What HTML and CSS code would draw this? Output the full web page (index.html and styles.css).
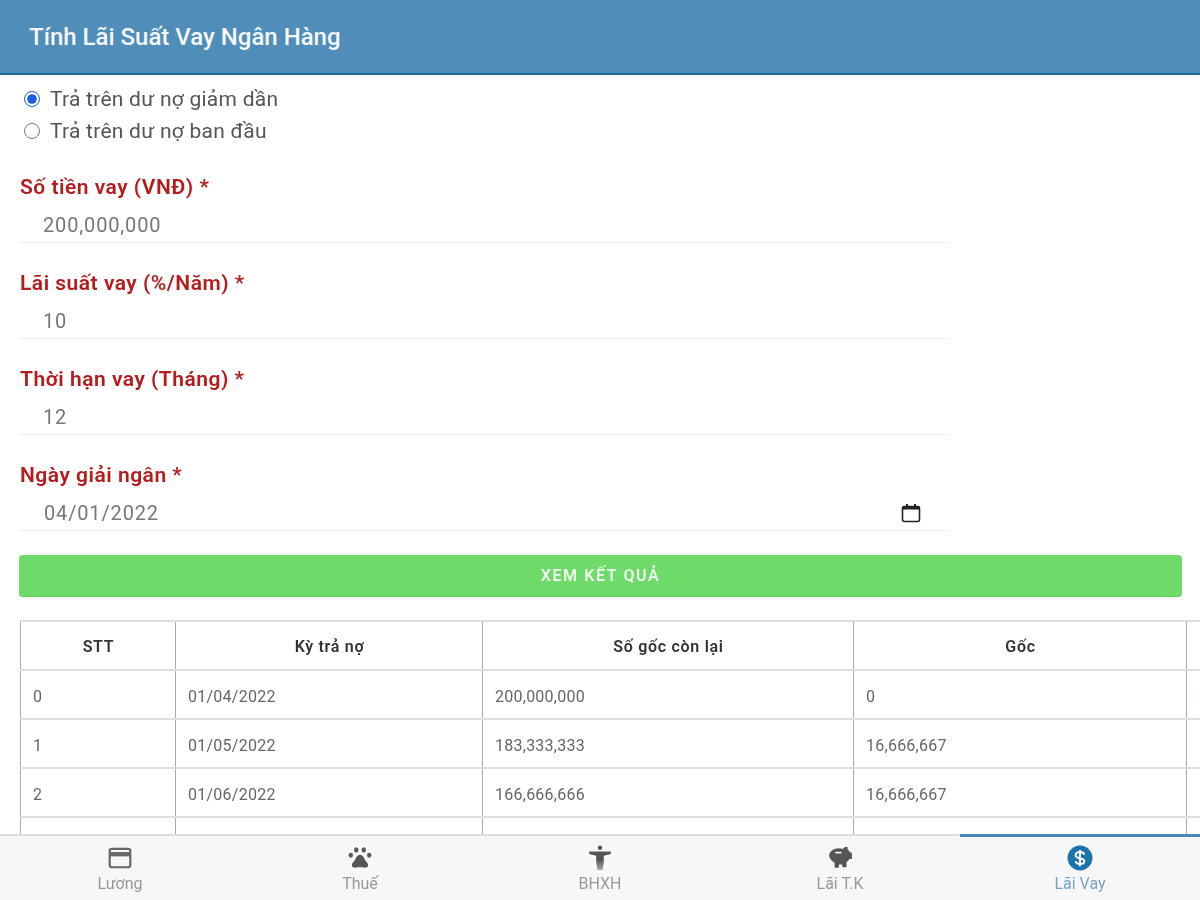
FILE: index.html
```html
<!DOCTYPE html>
<html lang="vi">
<head>
<meta charset="utf-8">
<title>Tính Lãi Suất Vay Ngân Hàng</title>
<link rel="stylesheet" href="styles.css">
</head>
<body>
<div class="app">
  <header class="topbar"><h1 class="title">Tính Lãi Suất Vay Ngân Hàng</h1></header>
  <main class="content">
    <div class="radios">
      <label class="radio-row"><input class="radio" type="radio" name="mode" checked><span>Trả trên dư nợ giảm dần</span></label>
      <label class="radio-row"><input class="radio" type="radio" name="mode"><span>Trả trên dư nợ ban đầu</span></label>
    </div>
    <div class="form">
      <div class="field"><div class="label">Số tiền vay (VNĐ) *</div><div class="value">200,000,000</div></div>
      <div class="field"><div class="label">Lãi suất vay (%/Năm) *</div><div class="value">10</div></div>
      <div class="field"><div class="label">Thời hạn vay (Tháng) *</div><div class="value">12</div></div>
      <div class="field"><div class="label">Ngày giải ngân *</div>
        <div class="value date"><span>04/01/2022</span>
          <svg class="cal" viewBox="0 0 20 20" width="20" height="20"><rect x="1.5" y="3.5" width="17" height="15" rx="2" fill="none" stroke="#222" stroke-width="1.6"/><rect x="1.5" y="3" width="17" height="3.5" fill="#222"/><rect x="5" y="1" width="2" height="3" fill="#222"/><rect x="13" y="1" width="2" height="3" fill="#222"/></svg>
        </div>
      </div>
    </div>
    <button class="submit" type="button">XEM KẾT QUẢ</button>
    <table class="grid">
      <colgroup><col class="c1"><col class="c2"><col class="c3"><col class="c4"><col class="c5"></colgroup>
      <thead><tr><th>STT</th><th>Kỳ trả nợ</th><th>Số gốc còn lại</th><th>Gốc</th><th>Lãi</th></tr></thead>
      <tbody>
        <tr><td>0</td><td>01/04/2022</td><td>200,000,000</td><td>0</td><td>0</td></tr>
        <tr><td>1</td><td>01/05/2022</td><td>183,333,333</td><td>16,666,667</td><td>1,666,667</td></tr>
        <tr><td>2</td><td>01/06/2022</td><td>166,666,666</td><td>16,666,667</td><td>1,527,778</td></tr>
        <tr><td>3</td><td>01/07/2022</td><td>149,999,999</td><td>16,666,667</td><td>1,388,889</td></tr>
      </tbody>
    </table>
  </main>
  <nav class="tabs">
    <a class="tab">
      <svg viewBox="0 0 24 24" width="26" height="26"><rect x="2.500" y="3.500" width="19" height="17" rx="2" fill="none" stroke="#666" stroke-width="2"/><rect x="2.500" y="6.500" width="19" height="4" fill="#666"/></svg>
      <span>Lương</span>
    </a>
    <a class="tab">
      <svg viewBox="0 0 24 24" width="26" height="26" fill="#555"><path d="M12 9c2.400 0 3.600 2.800 4.800 5 1 1.800 3 2.800 2.700 5-.3 1.800-2 2.100-3.700 1.800-1.200-.2-2.500-.3-3.800-.3s-2.600.1-3.800.3c-1.700.3-3.400 0-3.700-1.800-.3-2.200 1.700-3.200 2.700-5C8.400 11.800 9.600 9 12 9z"/><ellipse cx="3.500" cy="9.500" rx="2" ry="2.300"/><ellipse cx="20.500" cy="9.500" rx="2" ry="2.300"/><ellipse cx="8.500" cy="4.500" rx="2" ry="2.400"/><ellipse cx="15.500" cy="4.500" rx="2" ry="2.400"/></svg>
      <span>Thuế</span>
    </a>
    <a class="tab">
      <svg viewBox="0 0 24 24" width="26" height="26"><defs><linearGradient id="fade" x1="0" y1="0" x2="0" y2="1"><stop offset="0.45" stop-color="#555"/><stop offset="1" stop-color="#aaa"/></linearGradient></defs><circle cx="12" cy="2.500" r="2" fill="#555"/><path d="M2 6h20v2.400l-6.500 1.600V15l-1 8h-5l-1-8V10L2 8.400z" fill="url(#fade)"/></svg>
      <span>BHXH</span>
    </a>
    <a class="tab">
      <svg viewBox="0 0 24 24" width="26" height="26" fill="#555"><path d="M18 1.500c.9 0 1.200.7 1 2.500 1 .8 1.800 1.800 2.200 3H23v6h-2.300c-.6 1.200-1.500 2.200-2.700 3v3.500a1 1 0 0 1-1 1h-2a1 1 0 0 1-1-1v-1.500h-3V20a1 1 0 0 1-1 1H8a1 1 0 0 1-1-1v-3.700C4.500 14.800 2 12.500 2 9.500 2 6 6.500 3 11 3c1.300 0 2.600.2 3.700.6C15.600 2.300 16.800 1.500 18 1.500z"/><rect x="7.500" y="6.300" width="6" height="1.500" rx=".7" fill="#f7f7f7"/></svg>
      <span>Lãi T.K</span>
    </a>
    <a class="tab active">
      <svg viewBox="0 0 24 24" width="26" height="26"><circle cx="12" cy="12" r="11.500" fill="#1a75ad"/><path d="M16 8.800c-.6-1.500-2-2.300-4-2.300-2.300 0-4 1.100-4 2.900 0 4 8 2 8 5.300 0 1.800-1.700 2.800-4 2.800-2.100 0-3.600-.9-4.200-2.500M12 4.500v15" fill="none" stroke="#fff" stroke-width="1.900"/></svg>
      <span>Lãi Vay</span>
    </a>
  </nav>
</div>
</body>
</html>
```
FILE: styles.css
```css
* { box-sizing: border-box; }
html, body { margin: 0; height: 100%; overflow: hidden; }
body { background: #fff; font-family: Roboto, "Liberation Sans", sans-serif; color: #333; }
.app { height: 900px; display: flex; flex-direction: column; filter: blur(0.6px); }
.topbar { height: 75px; flex: none; background: #508db9; border-bottom: 2px solid #1d6a9e; display: flex; align-items: center; padding: 1px 0 0 29px; }
.title { margin: 0; font-size: 24px; font-weight: 500; color: #f4f8fb; }
.content { flex: 1; min-height: 0; overflow: hidden; }
.radios { padding: 8px 0 0 24px; }
.radio-row { display: flex; align-items: center; gap: 10px; height: 32px; font-size: 21px; letter-spacing: .25px; color: #555; }
.radio { margin: 0; width: 16px; height: 16px; accent-color: #1a5fe0; }
.form { width: 950px; padding-left: 20px; margin-top: 12px; }
.field { height: 96px; }
.label { height: 49px; padding-top: 15px; font-size: 21px; letter-spacing: .5px; line-height: 26px; font-weight: 600; color: #b51c1c; }
.value { height: 35px; padding: 0 0 0 23px; border-bottom: 1px solid #eee; font-size: 20px; line-height: 34px; color: #777; letter-spacing: .85px; }
.date { display: flex; justify-content: space-between; align-items: center; padding: 0 29px 0 24px; }
.cal { flex: none; }
.submit { display: block; margin: 12px 18px 0 19px; width: 1163px; height: 42px; border: 0; border-bottom: 1px solid #5fd05a; border-radius: 4px; background: #6eda69; color: #eefced; font: 600 16px Roboto, sans-serif; letter-spacing: 1.6px; }
.grid { margin: 23px 0 0 20px; width: 1300px; table-layout: fixed; border-collapse: collapse; font-size: 16px; letter-spacing: .25px; color: #666; }
.c1 { width: 155px; } .c2 { width: 307px; } .c3 { width: 371px; } .c4 { width: 333px; } .c5 { width: 134px; }
.grid th, .grid td { height: 49px; padding: 3px 11px 0 12px; border: 2px solid #ddd; border-left: 1.5px solid #aaa; border-right: 1.5px solid #aaa; text-align: left; font-weight: 400; }
.grid th { padding-top: 2px; text-align: center; font-weight: 600; letter-spacing: .7px; color: #333; }
.tabs { height: 66px; flex: none; display: flex; background: #f7f7f7; position: relative; z-index: 1; }
.tab { flex: 1; display: flex; flex-direction: column; align-items: center; border-top: 2px solid #ddd; padding-top: 9px; font-size: 16px; color: #999; }
.tab span { margin-top: 2px; line-height: 22px; }
.tab.active { border-top: 3px solid #4a88b8; padding-top: 8px; color: #7ba3c6; }
```
